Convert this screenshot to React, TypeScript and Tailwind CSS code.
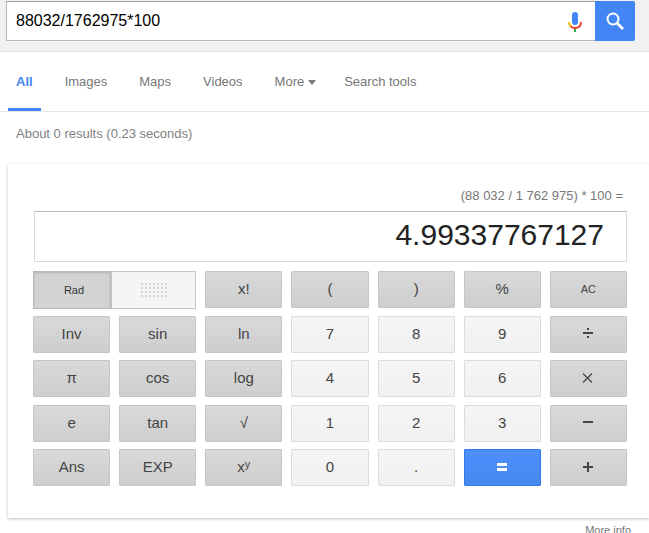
import { useState, type ReactNode } from "react";

type Tone = "dark" | "light" | "blue";

type Key = {
  id: string;
  face: ReactNode;
  tone: Tone;
  small?: boolean;
};

const tones: Record<Tone, string> = {
  dark: "border-[#c6c6c6] bg-linear-to-b from-[#d9d9d9] to-[#cecece] text-[#444]",
  light: "border-[#dcdcdc] bg-linear-to-b from-[#f5f5f5] to-[#f1f1f1] text-[#444]",
  blue: "border-[#3079ed] bg-linear-to-b from-[#4d90fe] to-[#4787ed] text-white",
};

/* Operator glyphs share one 12x12 box */
function Op({ d, fill = "#444" }: { d: string; fill?: string }) {
  return (
    <svg viewBox="0 0 12 12" className="mb-0.5 size-3" fill={fill} aria-hidden="true">
      <path d={d} />
    </svg>
  );
}

const dark = (id: string, face: ReactNode = id, small = false): Key => ({ id, face, tone: "dark", small });
const light = (id: string): Key => ({ id, face: id, tone: "light" });

const KEYS: Key[] = [
  dark("x!"),
  dark("("),
  dark(")"),
  dark("%"),
  dark("AC", "AC", true),

  dark("Inv"),
  dark("sin"),
  dark("ln"),
  light("7"),
  light("8"),
  light("9"),
  dark("divide", <Op d="M1 5h10v2H1zM5 1h2v2H5zM5 9h2v2H5z" />),

  dark("π"),
  dark("cos"),
  dark("log"),
  light("4"),
  light("5"),
  light("6"),
  dark("multiply", <Op fill="#505050" d="M1.6 1 5.500 4.900 9.400 1l1.100 1.100L6.600 6l3.900 3.900-1.100 1.100L5.500 7.100 1.600 11 .5 9.900 4.400 6 .5 2.100z" />),

  dark("e"),
  dark("tan"),
  dark("√"),
  light("1"),
  light("2"),
  light("3"),
  dark("minus", <Op d="M1 5h10v2H1z" />),

  dark("Ans"),
  dark("EXP"),
  dark("power", <span>x<sup className="-top-1 text-[11px]">y</sup></span>),
  light("0"),
  light("."),
  { id: "equals", face: <Op fill="#fff" d="M1 2h10v3H1zM1 7h10v3H1z" />, tone: "blue" },
  dark("plus", <Op d="M5 1h2v4h4v2H7v4H5V7H1V5h4z" />),
];

const TABS = ["All", "Images", "Maps", "Videos", "More", "Search tools"];

function MicIcon() {
  return (
    <svg viewBox="0 0 16 22" className="h-[22px] w-4" fill="none" aria-hidden="true">
      <rect x="5" y="2" width="6" height="13" rx="3" fill="#4285f4" />
      <path d="M7 18h2v4H7z" fill="#34a853" />
      <path d="M2 12c0 2 .7 3.600 2 4.700" stroke="#fbbc05" strokeWidth="2" />
      <path d="M3.700 16.500C4.900 17.600 6.300 18 8 18c3.600 0 6-2.300 6-6" stroke="#ea4335" strokeWidth="2" />
    </svg>
  );
}

function SearchIcon() {
  return (
    <svg viewBox="0 0 18 18" className="size-[18px]" fill="none" stroke="#fff" strokeWidth="2" aria-hidden="true">
      <circle cx="7" cy="7" r="5.500" />
      <path d="m11 11 6 6" strokeWidth="2.600" />
    </svg>
  );
}

/* Placeholder dots on the inactive half of the angle switch */
function Dots() {
  const cells = Array.from({ length: 28 }, (_, i) => [(i % 7) * 4, Math.floor(i / 7) * 4]);
  return (
    <svg viewBox="0 0 26 14" className="h-3.5 w-[26px]" fill="#d2d2d2" aria-hidden="true">
      {cells.map(([x, y]) => (
        <rect key={`${x}-${y}`} x={x} y={y} width="2" height="2" />
      ))}
    </svg>
  );
}

function SearchBar() {
  const [query, setQuery] = useState("88032/1762975*100");
  return (
    <header className="border-b border-[#e5e5e5] bg-[#f1f1f1] pt-px pr-3.5 pb-2.5 pl-1.5">
      <form className="flex h-10" onSubmit={(e) => e.preventDefault()}>
        <div className="flex min-w-0 flex-1 items-center border border-r-0 border-[#b9b9b9] border-t-[#a0a0a0] bg-white pr-3 pl-[9px]">
          <input
            aria-label="Search"
            value={query}
            onChange={(e) => setQuery(e.target.value)}
            className="min-w-0 flex-1 bg-transparent text-base text-black outline-none"
          />
          <button type="button" aria-label="Search by voice">
            <MicIcon />
          </button>
        </div>
        <button aria-label="Submit search" className="flex w-10 items-center justify-center rounded-r-xs bg-[#4285f4]">
          <SearchIcon />
        </button>
      </form>
    </header>
  );
}

function Tabs() {
  return (
    <nav className="flex h-[60px] gap-4 border-b border-[#e5e5e5] pl-2 text-[13px] text-[#777]">
      {TABS.map((tab) => (
        <a
          key={tab}
          href="#"
          aria-current={tab === "All" ? "page" : undefined}
          className={`flex items-center gap-1 border-b-3 pt-1 ${tab === "More" ? "pr-1 pl-2" : "px-2"} ${
            tab === "All" ? "border-[#4285f4] font-bold text-[#4285f4]" : "border-transparent"
          }`}
        >
          {tab}
          {tab === "More" && (
            <svg viewBox="0 0 8 5" className="h-[5px] w-2" fill="#777" aria-hidden="true">
              <path d="M0 0h8L4 5z" />
            </svg>
          )}
        </a>
      ))}
    </nav>
  );
}

function Calculator() {
  return (
    <section className="ml-2 bg-white pt-6 pr-[22px] pb-8 pl-[25px] shadow-[0_1px_3px_rgba(0,0,0,0.25)]">
      <p className="pr-1 text-right text-[13px] leading-4 text-[#777]">(88 032 / 1 762 975) * 100 =</p>
      <output className="mt-[7px] ml-px block h-[51px] border border-[#d9d9d9] border-t-[#c0c0c0] pr-[22px] text-right text-3xl leading-[46px] text-[#222]">
        4.99337767127
      </output>

      <div className="mt-[9px] grid h-[215px] auto-rows-[37px] grid-cols-7 content-between gap-x-[9px] text-[15px]">
        <div className="col-span-2 flex h-[38px] text-[11px]">
          <button className="w-[78px] border border-[#b9b9b9] bg-[#d3d3d3] pl-1 text-[#333] shadow-[inset_0_1px_2px_rgba(0,0,0,0.15)]">
            Rad
          </button>
          <button aria-label="Deg" className="flex flex-1 items-center justify-center border border-[#c6c6c6] bg-[#f5f5f5]">
            <Dots />
          </button>
        </div>
        {KEYS.map((key) => (
          <button
            key={key.id}
            aria-label={key.id}
            className={`flex items-center justify-center rounded-[1px] border ${tones[key.tone]} ${key.small ? "text-[11px]" : ""}`}
          >
            {key.face}
          </button>
        ))}
      </div>
    </section>
  );
}

export default function App() {
  return (
    <div className="min-h-screen overflow-hidden bg-white font-['Liberation_Sans',Arial,sans-serif]">
      <SearchBar />
      <Tabs />
      <p className="px-4 pt-3.5 pb-[22px] text-[13px] leading-4 text-[#808080]">About 0 results (0.23 seconds)</p>
      <Calculator />
      <div className="pt-1 pr-[18px] text-right text-[11px] leading-4 text-[#777]">
        <a href="#">More info</a>
      </div>
    </div>
  );
}
